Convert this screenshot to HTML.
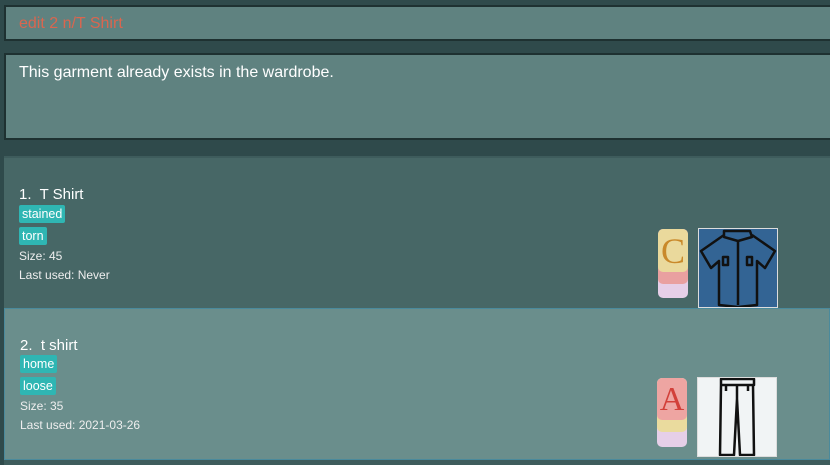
<!DOCTYPE html>
<html><head><style>
body{margin:0;width:830px;height:465px;background:#2f4a4b;font-family:"Liberation Sans",sans-serif;overflow:hidden;position:relative}
.box{position:absolute;background:#5f8280;border:2px solid #1e3131;box-sizing:border-box}
.cmd{left:4px;top:5px;width:830px;height:36px;color:#d9664f;font-size:16px;padding:8px 0 0 13px}
.res{left:4px;top:53px;width:830px;height:87px;color:#fff;font-size:16px;padding:9px 0 0 13px}
.list{position:absolute;left:4px;top:156px;width:826px;height:309px;background:#3e5c5c}
.card{position:absolute;left:0;width:826px;box-sizing:border-box;color:#fff}
.c1{top:2px;height:151px;background:#476766}
.c2{top:152px;height:152px;background:#6a8e8c;border:1px solid #4a8a9c}
.t{position:absolute;left:15px;font-size:15px}
.tag{position:absolute;left:15px;background:#2fb6b3;font-size:12.5px;padding:2px 3px;border-radius:2px;line-height:14px}
.s{position:absolute;left:15px;font-size:12px;color:#eee}
.chip{position:absolute;width:30px;height:69px;border-radius:5px;overflow:hidden;background:#e6cfe8}
.chip div{position:absolute;left:0;width:30px;border-radius:5px}
.img{position:absolute;width:80px;height:80px;box-sizing:border-box;border:1px solid #ddd}
</style></head><body>
<div class="box cmd">edit 2 n/T Shirt</div>
<div class="box res">This garment already exists in the wardrobe.</div>
<div class="list">
<div class="card c1">
<div class="t" style="top:28px">1.&nbsp; T Shirt</div>
<div class="tag" style="top:47px">stained</div>
<div class="tag" style="top:69px">torn</div>
<div class="s" style="top:91px">Size: 45</div>
<div class="s" style="top:110px">Last used: Never</div>
<div class="chip" style="left:654px;top:71px"><div style="top:0;height:55px;background:#e9a0a0"></div><div style="top:0;height:43px;background:#ead99c;font:36px 'Liberation Serif',serif;color:#c9892a;text-align:center;line-height:44px">C</div></div>
<div class="img" style="left:694px;top:70px;background:#336494">
<svg width="78" height="78" viewBox="0 0 78 78" fill="none" stroke="#111" stroke-width="2.5" stroke-linejoin="round"><path d="M25 2h26l2 6-14 4-14-4z M25 6L2 22l10 17 8-7v44l19 2 19-2V32l8 7 10-17L53 6 M39 12v64 M24 28h5v8h-5z M48 28h5v8h-5z"/></svg></div>
</div>
<div class="card c2">
<div class="t" style="top:28px">2.&nbsp; t shirt</div>
<div class="tag" style="top:46px">home</div>
<div class="tag" style="top:68px">loose</div>
<div class="s" style="top:90px">Size: 35</div>
<div class="s" style="top:109px">Last used: 2021-03-26</div>
<div class="chip" style="left:652px;top:69px"><div style="top:0;height:54px;background:#eadb9e"></div><div style="top:0;height:42px;background:#eea5a2;font:34px 'Liberation Serif',serif;color:#d2403a;text-align:center;line-height:44px">A</div></div>
<div class="img" style="left:692px;top:68px;background:#f1f4f5">
<svg width="78" height="78" viewBox="0 0 78 78" fill="none" stroke="#111" stroke-width="2.5" stroke-linejoin="round"><path d="M23 1h33v6H23z M23 7l-1 70h14l3-56 3 56h14l-1-70 M39 7v14 M28 7v6 M50 7v6"/></svg></div>
</div>
</div>
</body></html>
